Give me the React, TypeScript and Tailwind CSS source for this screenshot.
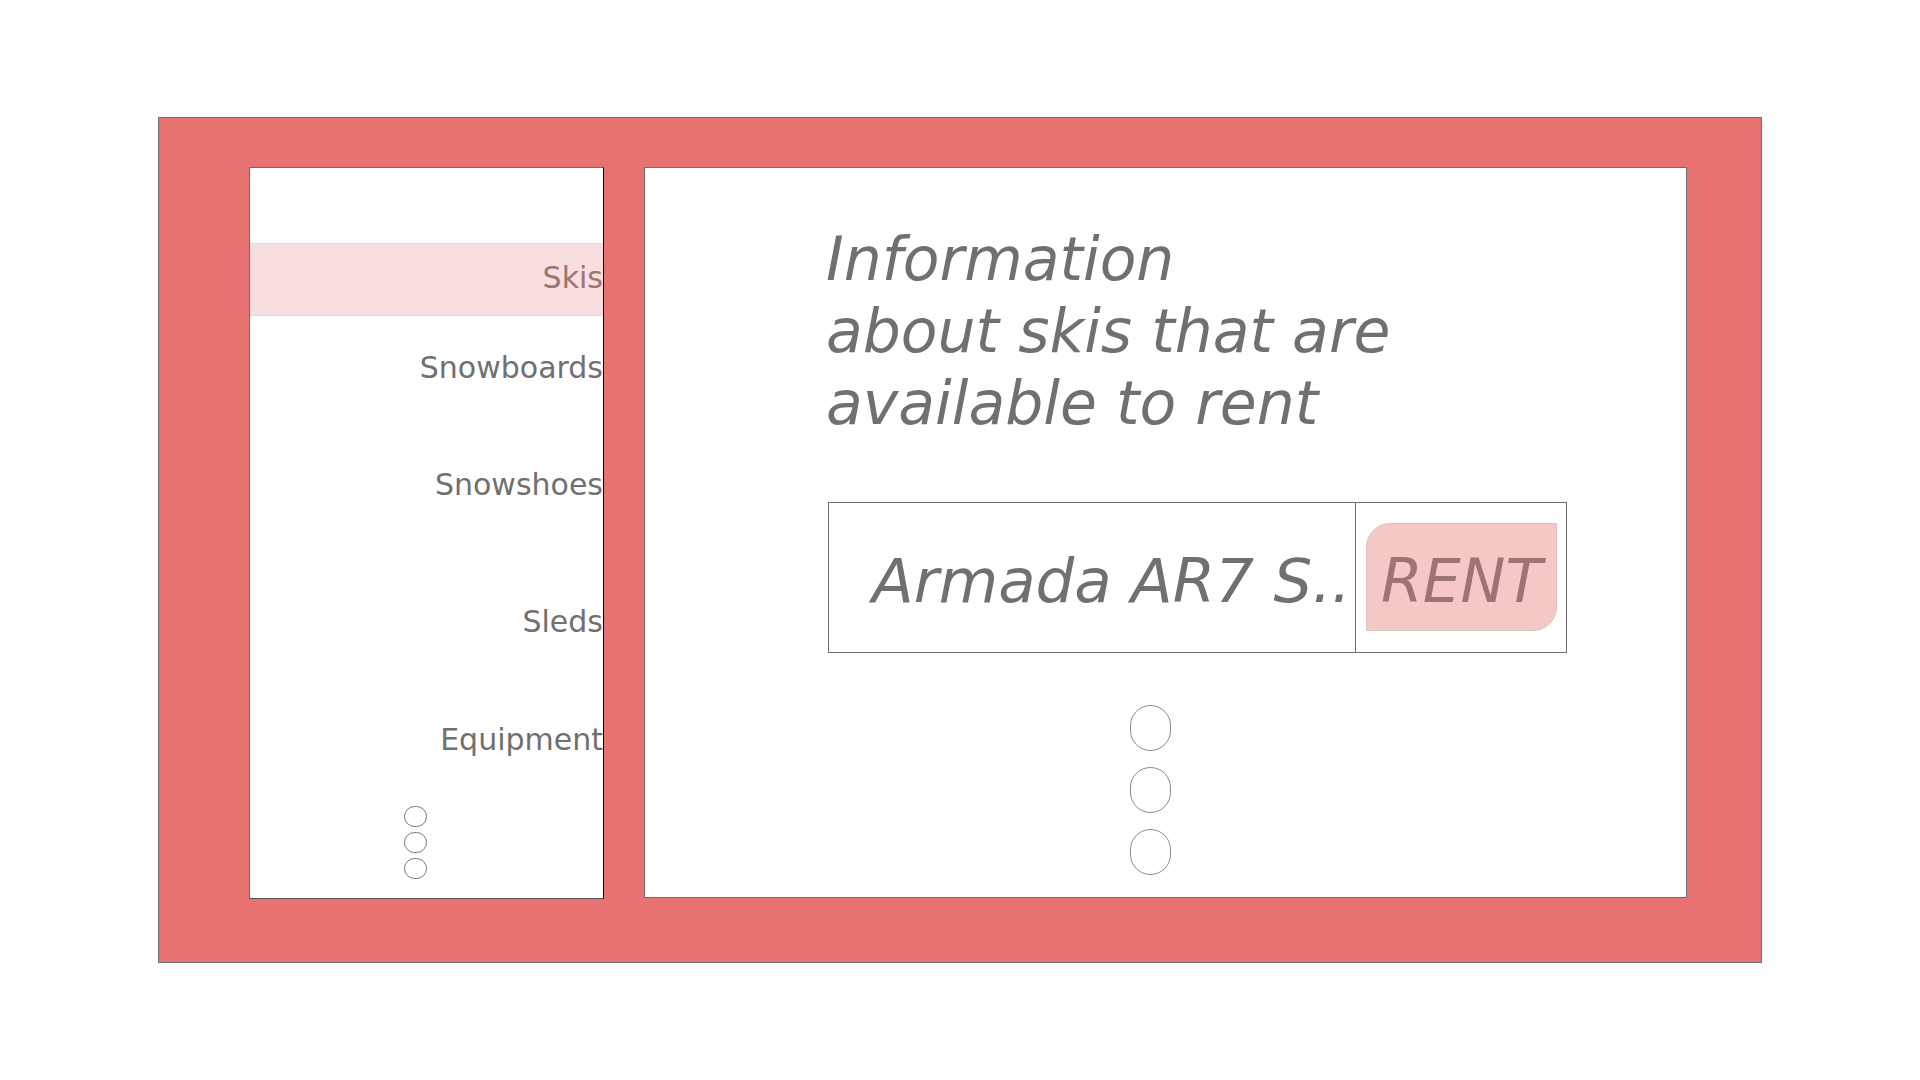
const navItems = [
  { label: "Snowboards", mt: "mt-[34px]" },
  { label: "Snowshoes", mt: "mt-[81px]" },
  { label: "Sleds", mt: "mt-[101px]" },
  { label: "Equipment", mt: "mt-[82px]" },
];

function Sidebar() {
  return (
    <aside className="flex flex-col w-[355px] h-[732px] shrink-0 bg-white border border-t-[#6e6e6e] border-l-[#6e6e6e] border-r-black border-b-[#555]">
      <div className="mt-[75px] h-[73px] bg-[#f8dede] border-y border-[#dcdcdc] text-right pt-[16px] text-[30px] leading-[36px] text-[#9c7474]">
        Skis
      </div>
      {navItems.map((item) => (
        <div
          key={item.label}
          className={`${item.mt} text-right text-[30px] leading-[36px] text-[#707070]`}
        >
          {item.label}
        </div>
      ))}
      <div className="mt-[48px] ml-[154px] flex flex-col gap-[5px]">
        <span className="block w-[23px] h-[21px] rounded-full border border-[#777]" />
        <span className="block w-[23px] h-[21px] rounded-full border border-[#777]" />
        <span className="block w-[23px] h-[21px] rounded-full border border-[#777]" />
      </div>
    </aside>
  );
}

function RentRow() {
  return (
    <div className="flex w-[739px] h-[151px] border border-[#707070] mt-[63px]">
      <div className="w-[527px] shrink-0 border-r border-[#707070] pl-[43px] pt-[42px] text-[61px] leading-[72px] italic text-[#707070] whitespace-nowrap overflow-hidden">
        Armada AR7 S..
      </div>
      <div className="flex-1 pt-[20px] pl-[10px]">
        <button className="w-[191px] h-[108px] bg-[#f5c7c7] border border-[#d9c4c4] rounded-tl-[24px] rounded-br-[24px] text-left pl-[14px] pt-[21px] flex items-start">
          <span className="text-[60px] leading-[72px] italic text-[#9c7474]">RENT</span>
        </button>
      </div>
    </div>
  );
}

export default function App() {
  return (
    <div className="min-h-screen bg-white pt-[117px] pl-[158px]" style={{ fontFamily: '"DejaVu Sans", sans-serif' }}>
      <div className="w-[1604px] h-[846px] bg-[#e87272] border border-[#707070] flex pl-[90px] pt-[49px] gap-[40px]">
        <Sidebar />
        <main className="w-[1043px] h-[731px] bg-white border border-[#707070] flex flex-col pl-[183px] pt-[55px]">
          <h1 className="text-[60px] leading-[72px] italic font-normal text-[#707070] -ml-[2px]">
            Information
            <br />
            about skis that are
            <br />
            available to rent
          </h1>
          <RentRow />
          <div className="mt-[52px] ml-[302px] flex flex-col gap-[16px]">
            <span className="block w-[41px] h-[46px] rounded-full border border-[#888]" />
            <span className="block w-[41px] h-[46px] rounded-full border border-[#888]" />
            <span className="block w-[41px] h-[46px] rounded-full border border-[#888]" />
          </div>
        </main>
      </div>
    </div>
  );
}
